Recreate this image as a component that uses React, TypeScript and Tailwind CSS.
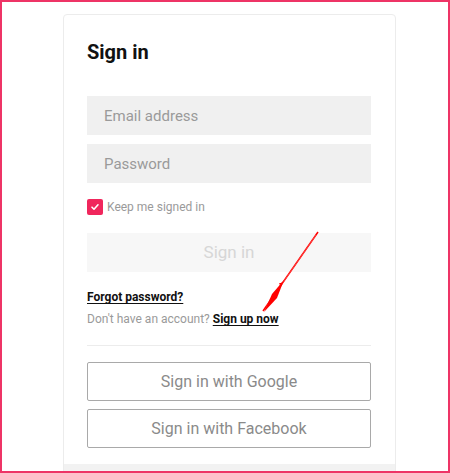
export default function App() {
	return (
		<div
			className="relative h-[473px] w-[450px] overflow-hidden border-2 border-[#ee3466] bg-white"
			style={{ fontFamily: "Roboto, 'Liberation Sans', sans-serif" }}
		>
			<div className="ml-[61px] mt-[12px] w-[333px] overflow-hidden rounded-[4px] border border-[#ececec] bg-white">
				<div className="pb-4 pl-[23px] pr-[24px] pt-[23px]">
					<h1 className="text-[20px] font-bold leading-[28px] text-[#111]">Sign in</h1>

					<div className="mt-[30px] flex flex-col gap-[9px]">
						<input
							type="email"
							placeholder="Email address"
							className="h-[39px] w-full bg-[#f0f0f0] px-[17px] text-[15px] text-[#333] placeholder-[#9a9a9a] outline-none"
						/>
						<input
							type="password"
							placeholder="Password"
							className="h-[39px] w-full bg-[#f0f0f0] px-[17px] text-[15px] text-[#333] placeholder-[#9a9a9a] outline-none"
						/>
					</div>

					<label className="mt-[16px] flex items-center gap-[4px]">
						<span className="flex h-[16px] w-[16px] items-center justify-center rounded-[2px] bg-[#f0265c]">
							<svg width="10" height="10" viewBox="0 0 10 10" fill="none">
								<path d="M2 5.2l2 2 4-4.4" stroke="white" strokeWidth="1.6" strokeLinecap="round" strokeLinejoin="round" />
							</svg>
						</span>
						<span className="text-[12px] leading-[16px] text-[#9a9a9a]">Keep me signed in</span>
					</label>

					<button
						type="submit"
						disabled
						className="mt-[18px] h-[39px] w-full bg-[#f7f7f7] text-[17px] text-[#d6d6d6]"
					>
						Sign in
					</button>

					<div className="mt-[17px] text-[12px] leading-[17px]">
						<a className="font-bold text-[#111] underline underline-offset-2">Forgot password?</a>
					</div>
					<div className="mt-[5px] text-[12px] leading-[17px] text-[#9a9a9a]">
						Don't have an account?{" "}
						<a className="font-bold text-[#111] underline underline-offset-2">Sign up now</a>
					</div>

					<div className="mt-[17px] h-px bg-[#ececec]" />

					<div className="mt-[16px] flex flex-col gap-[8px]">
						<button className="h-[39px] w-full rounded-[2px] border-[1.5px] border-[#a9a9a9] text-[16px] text-[#8a8a8a]">
							Sign in with Google
						</button>
						<button className="h-[39px] w-full rounded-[2px] border-[1.5px] border-[#a9a9a9] text-[16px] text-[#8a8a8a]">
							Sign in with Facebook
						</button>
					</div>
				</div>
				<div className="h-[20px] bg-[#f2f2f2]" />
			</div>

			<svg
				className="pointer-events-none absolute left-0 top-0"
				width="450"
				height="473"
				viewBox="0 0 450 473"
			>
				<path d="M316 230 L261 309" stroke="#ff0000" strokeWidth="1.5" fill="none" />
				<path d="M314 233 L264 305" stroke="#ff4a4a" strokeWidth="0.8" fill="none" />
				<path d="M282 278 L275 296 L262 310 L270 292 Z" fill="#ff0000" />
				<path d="M280 281 l-3 1" stroke="#ff0000" strokeWidth="1" />
			</svg>
		</div>
	);
}
